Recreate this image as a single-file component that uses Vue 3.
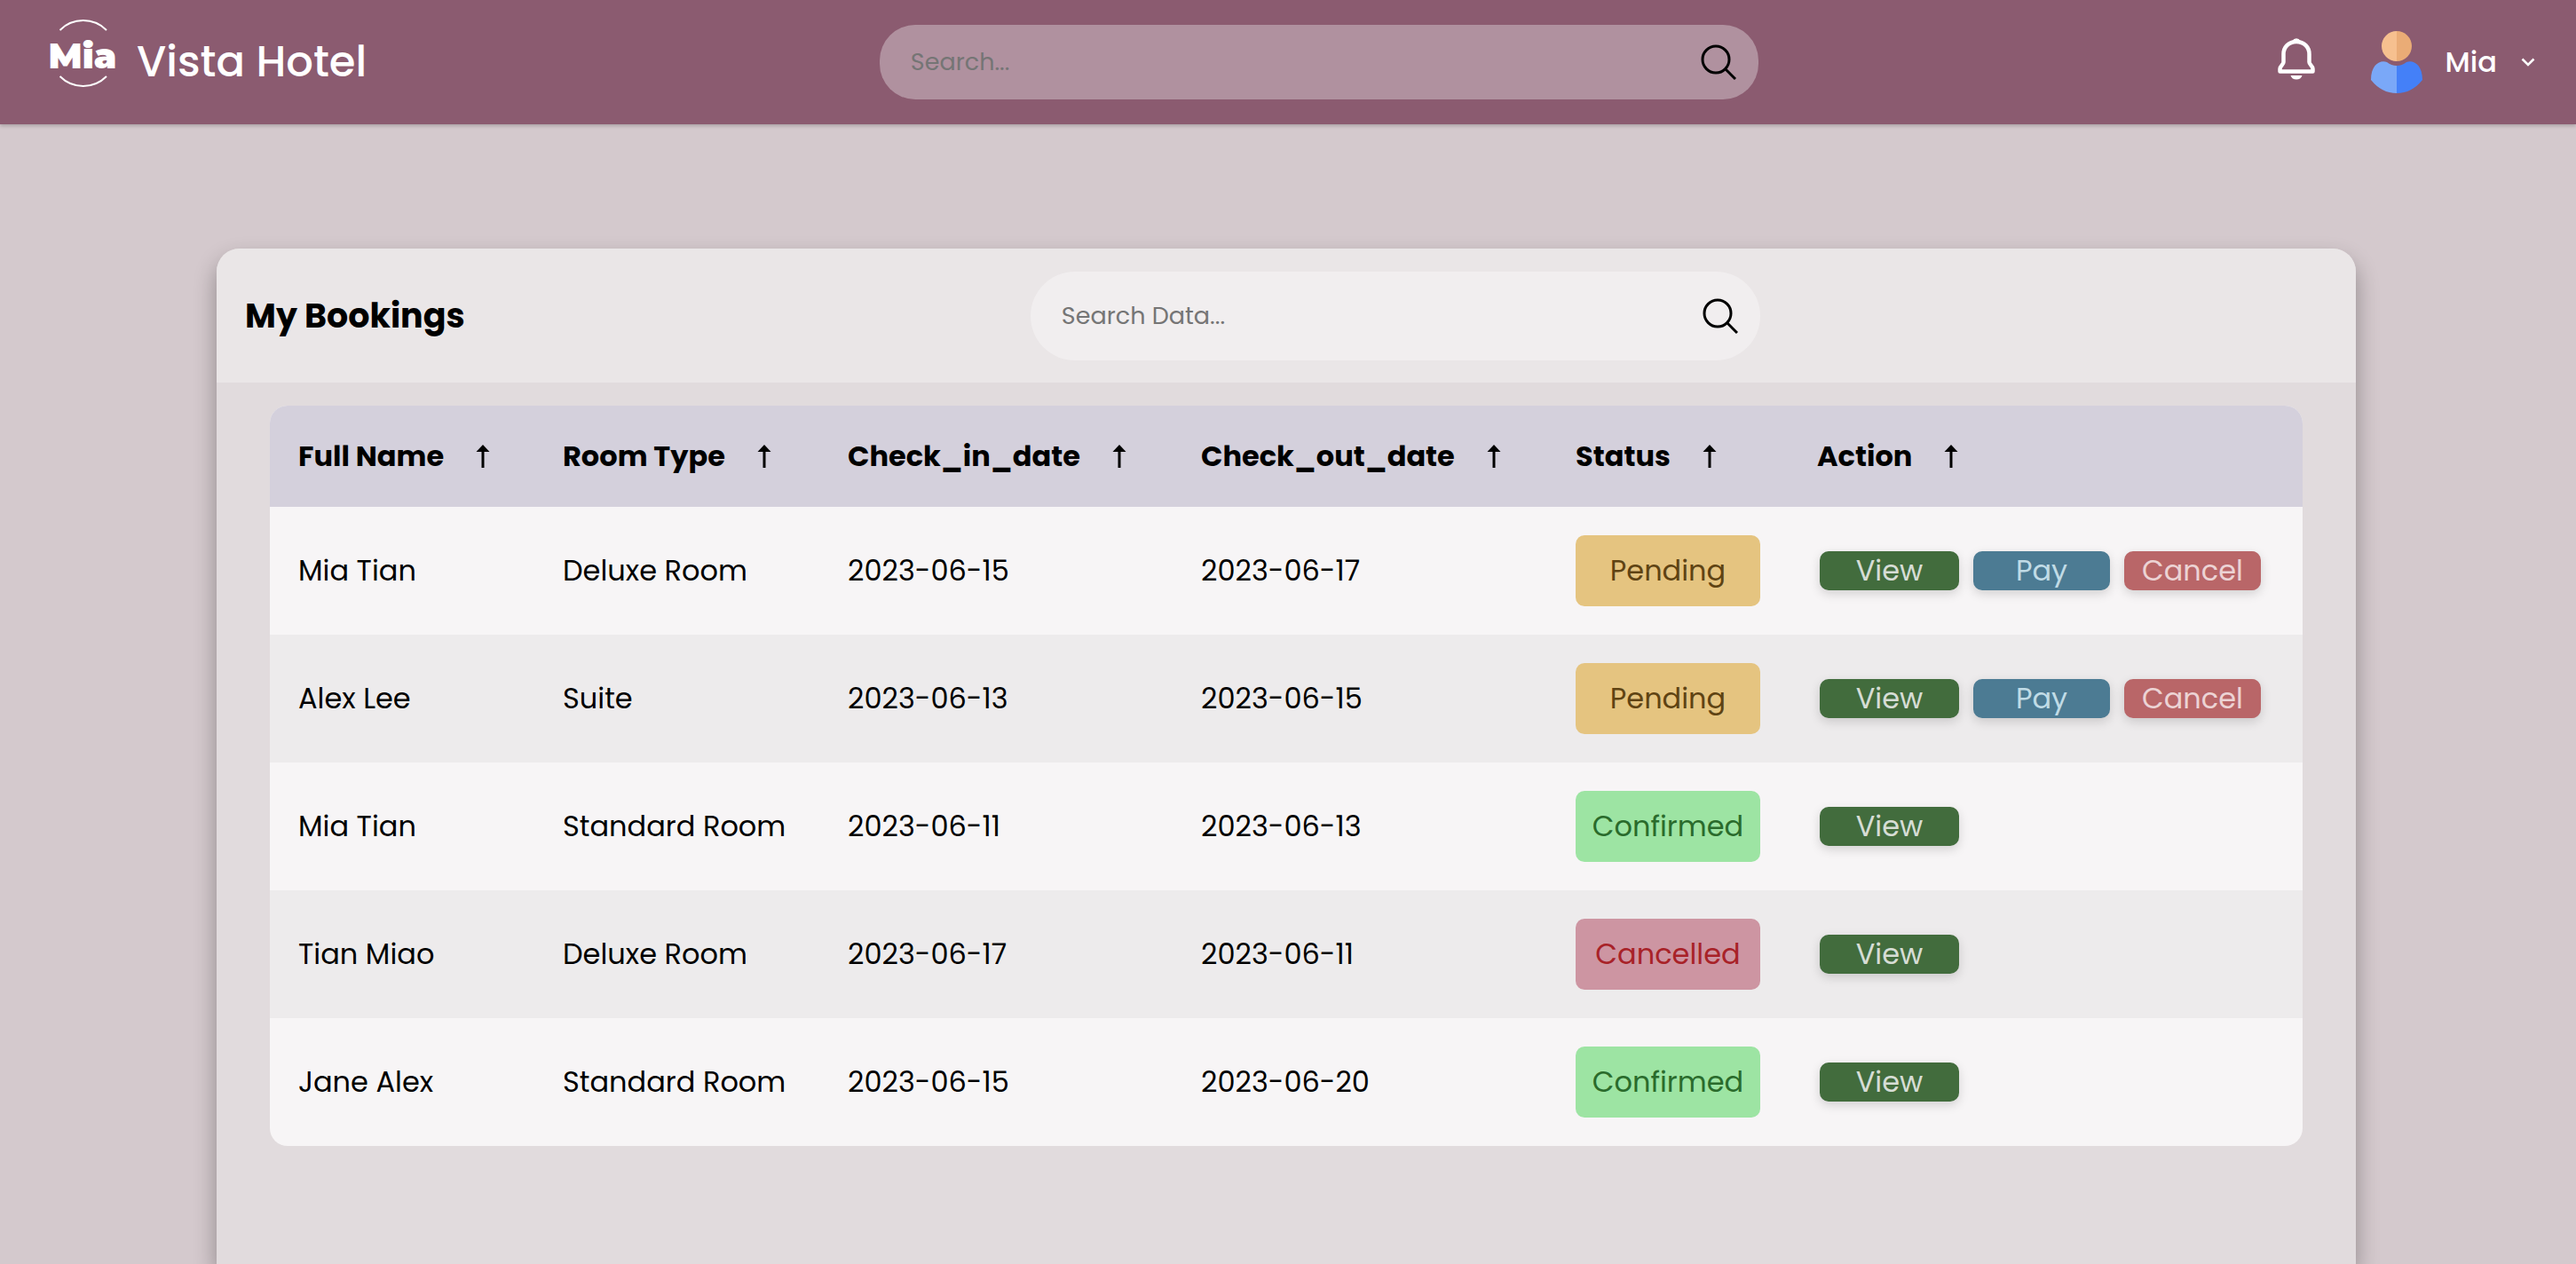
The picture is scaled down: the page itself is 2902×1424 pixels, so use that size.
<script setup>
import { ref, computed } from 'vue'

const siteQuery = ref('')
const query = ref('')

const columns = ['Full Name', 'Room Type', 'Check_in_date', 'Check_out_date', 'Status', 'Action']

const bookings = [
  { name: 'Mia Tian', room: 'Deluxe Room', checkIn: '2023-06-15', checkOut: '2023-06-17', status: 'Pending' },
  { name: 'Alex Lee', room: 'Suite', checkIn: '2023-06-13', checkOut: '2023-06-15', status: 'Pending' },
  { name: 'Mia Tian', room: 'Standard Room', checkIn: '2023-06-11', checkOut: '2023-06-13', status: 'Confirmed' },
  { name: 'Tian Miao', room: 'Deluxe Room', checkIn: '2023-06-17', checkOut: '2023-06-11', status: 'Cancelled' },
  { name: 'Jane Alex', room: 'Standard Room', checkIn: '2023-06-15', checkOut: '2023-06-20', status: 'Confirmed' }
]

const visible = computed(() => {
  const q = query.value.trim().toLowerCase()
  return bookings.filter((b) => Object.values(b).join(' ').toLowerCase().includes(q))
})
</script>

<template>
  <div class="page">
    <header class="topbar">
      <a class="brand" href="#">
        <svg class="logo" viewBox="0 0 88 76" aria-hidden="true">
          <path d="M17.500 12A37 37 0 0 1 70 12M17.500 64A37 37 0 0 0 70 64" fill="none" stroke="#fff" stroke-width="2" />
          <text x="43" y="55" text-anchor="middle" class="logo-text">Mia</text>
        </svg>
        <span class="brand-name">Vista Hotel</span>
      </a>

      <label class="search site-search">
        <input v-model="siteQuery" type="search" placeholder="Search..." aria-label="Search" />
        <svg class="search-icon" viewBox="0 0 40 40" aria-hidden="true">
          <circle cx="17" cy="17" r="15" />
          <path d="M28 28L39 39" />
        </svg>
      </label>

      <div class="account">
        <button class="icon-button" type="button" aria-label="Notifications">
          <svg class="bell" viewBox="0 0 44 48" aria-hidden="true">
            <path d="M22 5C13 5 7.500 11.500 7.500 19V28C7.500 31 3.500 32 3.500 35.500V38.500H40.500V35.500C40.500 32 36.500 31 36.500 28V19C36.500 11.500 31 5 22 5Z" fill="none" stroke="#fff" stroke-width="4.500" stroke-linejoin="round" />
            <path d="M17.500 4A5 5 0 0 1 26.500 4Z" fill="#fff" />
            <path d="M15.500 43H28.500Q27 47.500 22 47.500Q17 47.500 15.500 43Z" fill="#fff" />
          </svg>
        </button>
        <button class="user" type="button">
          <svg class="avatar" viewBox="0 0 58 70" aria-hidden="true">
            <path d="M29 0A17 17 0 0 0 29 34Z" fill="#f6c08f" />
            <path d="M29 0A17 17 0 0 1 29 34Z" fill="#eaac76" />
            <path d="M29 39Q23 39 18 35C11 32 0 37 0 55Q12 70 29 70Z" fill="#7aa8f8" />
            <path d="M29 39Q35 39 40 35C47 32 58 37 58 55Q46 70 29 70Z" fill="#4480f8" />
          </svg>
          <span class="user-name">Mia</span>
          <svg class="chevron" viewBox="0 0 16 10" aria-hidden="true">
            <path d="M1.500 1.500L8 8L14.500 1.500" fill="none" stroke="#fff" stroke-width="2.500" />
          </svg>
        </button>
      </div>
    </header>

    <main class="content">
      <section class="card">
        <div class="card-head">
          <h1>My Bookings</h1>
          <label class="search data-search">
            <input v-model="query" type="search" placeholder="Search Data..." aria-label="Search Data" />
            <svg class="search-icon" viewBox="0 0 40 40" aria-hidden="true">
              <circle cx="17" cy="17" r="15" />
              <path d="M28 28L39 39" />
            </svg>
          </label>
        </div>

        <div class="table-wrap">
          <table>
            <colgroup>
              <col class="c-name" />
              <col class="c-room" />
              <col class="c-in" />
              <col class="c-out" />
              <col class="c-status" />
              <col class="c-action" />
            </colgroup>
            <thead>
              <tr>
                <th v-for="c in columns" :key="c" scope="col">
                  <button class="sort" type="button">
                    {{ c }}
                    <svg class="arrow" viewBox="0 0 16 26" aria-hidden="true">
                      <path d="M8 0L15.500 8H9.500V26H6.500V8H0.500Z" />
                    </svg>
                  </button>
                </th>
              </tr>
            </thead>
            <tbody>
              <tr v-for="(b, i) in visible" :key="i">
                <td>{{ b.name }}</td>
                <td>{{ b.room }}</td>
                <td>{{ b.checkIn }}</td>
                <td>{{ b.checkOut }}</td>
                <td><p class="status" :class="b.status.toLowerCase()">{{ b.status }}</p></td>
                <td>
                  <div class="actions">
                    <button class="btn view" type="button">View</button>
                    <button v-if="b.status === 'Pending'" class="btn pay" type="button">Pay</button>
                    <button v-if="b.status === 'Pending'" class="btn cancel" type="button">Cancel</button>
                  </div>
                </td>
              </tr>
            </tbody>
          </table>
        </div>
      </section>
    </main>
  </div>
</template>

<style>
body {
  margin: 0;
  background: #d4c9cd;
}
</style>

<style scoped>
.page {
  display: flex;
  flex-direction: column;
  min-height: 100vh;
  overflow: hidden;
  color: #000;
  font-family: Poppins, Inter, "Open Sans", sans-serif;
  font-size: 32px;
}
.page * {
  box-sizing: border-box;
}
button,
input {
  font: inherit;
  color: inherit;
  border: 0;
  padding: 0;
  background: none;
}
button {
  cursor: pointer;
}
svg {
  flex: none;
  display: block;
}

.topbar {
  display: flex;
  align-items: center;
  justify-content: space-between;
  height: 140px;
  padding: 0 46px 0 50px;
  background: #8b5b70;
  box-shadow: 0 2px 4px rgba(0, 0, 0, 0.2);
}
.brand {
  display: flex;
  align-items: center;
  gap: 16px;
  color: #fff;
  text-decoration: none;
}
.logo {
  width: 88px;
  height: 76px;
  margin-bottom: 20px;
}
.logo-text {
  font-family: Montserrat, Inter, sans-serif;
  font-size: 40px;
  font-weight: 900;
  fill: #fff;
}
.brand-name {
  font-size: 48px;
  font-weight: 500;
}

.search {
  display: flex;
  align-items: center;
  padding: 0 25px 0 35px;
  font-size: 27px;
}
.search input {
  flex: 1;
  min-width: 0;
  outline: none;
  appearance: none;
}
.search input::placeholder {
  color: #757575;
  opacity: 1;
}
.search-icon {
  width: 40px;
  height: 40px;
  fill: none;
  stroke: #000;
  stroke-width: 3;
}
.site-search {
  flex: 0 1 990px;
  height: 84px;
  border-radius: 40px;
  background: #b0919f;
}

.account,
.user {
  display: flex;
  align-items: center;
}
.account {
  gap: 62px;
  padding-left: 6px;
  color: #fff;
}
.bell {
  width: 44px;
  height: 48px;
  margin-bottom: 8px;
}
.user-name {
  margin: 0 27px 0 26px;
  font-weight: 500;
}
.avatar {
  width: 58px;
  height: 70px;
}
.chevron {
  width: 16px;
  height: 10px;
}

.content {
  flex: 1;
  display: flex;
  padding: 140px 248px 0 244px;
}
.card {
  flex: 1;
  min-width: 0;
  border-radius: 26px 26px 0 0;
  background: #e1dbdd;
  box-shadow: 0 13px 26px rgba(0, 0, 0, 0.33);
}
.card-head {
  display: flex;
  align-items: center;
  height: 151px;
  padding: 0 34px 0 32px;
  border-radius: 26px 26px 0 0;
  background: #eae6e7;
}
h1 {
  margin: 0;
  font-size: 38px;
  font-weight: 700;
}
.data-search {
  flex: 0 1 822px;
  height: 100px;
  margin: 0 auto;
  border-radius: 50px;
  background: #f1eeef;
}

.table-wrap {
  margin: 26px 60px;
  border-radius: 20px;
  overflow: hidden;
  background: #f7f5f6;
}
table {
  width: 100%;
  table-layout: fixed;
  border-collapse: collapse;
}
.c-name { width: 298px; }
.c-room { width: 321px; }
.c-in { width: 398px; }
.c-out { width: 422px; }
.c-status { width: 272px; }
.c-action { width: 579px; }
th,
td {
  padding: 0 32px;
  text-align: left;
  white-space: nowrap;
}
th {
  height: 114px;
  background: #d4d0dc;
}
td {
  height: 144px;
}
tbody tr:nth-child(even) {
  background: #edebec;
}
.sort {
  display: flex;
  align-items: center;
  gap: 36px;
  font-weight: 700;
}
.arrow {
  width: 16px;
  height: 26px;
}
.status {
  margin: 0;
  line-height: 80px;
  border-radius: 10px;
  text-align: center;
}
.pending {
  background: #e5c480;
  color: #5f4313;
}
.confirmed {
  background: #9de4a3;
  color: #2a6b2c;
}
.cancelled {
  background: #cd95a2;
  color: #a82228;
}
.actions {
  display: flex;
  gap: 16px;
  padding-left: 3px;
}
.btn {
  width: 154px;
  height: 44px;
  border-radius: 10px;
  line-height: 44px;
  box-shadow: 0 4px 12px rgba(0, 0, 0, 0.15);
}
.view {
  width: 157px;
  background: #426c3d;
  color: #d6ddd5;
}
.pay {
  background: #4c7b93;
  color: #c0dbe6;
}
.cancel {
  background: #b96668;
  color: #ecd3d4;
}
</style>
